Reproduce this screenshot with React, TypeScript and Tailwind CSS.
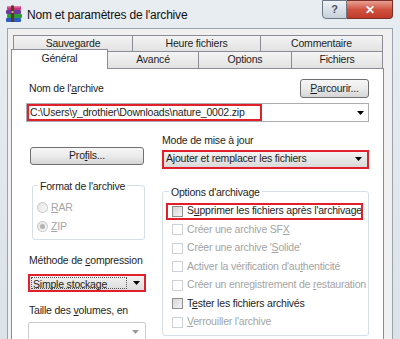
import React from 'react';

function Arrow({ color = '#000' }: { color?: string }) {
  return (
    <svg width="7" height="4" viewBox="0 0 7 4">
      <path d="M0 0h7L3.5 4z" fill={color} />
    </svg>
  );
}

function RarIcon() {
  return (
    <svg width="18" height="17" viewBox="0 0 18 17">
      <rect x="2" y="1" width="14" height="4" rx="1" fill="#c8347c" />
      <rect x="2" y="1" width="14" height="1.5" rx="0.7" fill="#e87ab0" />
      <rect x="1" y="5" width="15" height="4" rx="1" fill="#6a3a9e" />
      <rect x="2" y="9" width="15" height="4" rx="1" fill="#2f9a3c" />
      <rect x="1" y="13" width="15" height="4" rx="1" fill="#2a5cc4" />
      <rect x="6" y="0.5" width="3" height="16.5" fill="#5b3b1c" />
      <rect x="6.5" y="6" width="2" height="2" fill="#d9b35a" />
    </svg>
  );
}

function Check({
  children,
  disabled,
  red,
}: {
  children: React.ReactNode;
  disabled?: boolean;
  red?: boolean;
}) {
  return (
    <div className="relative flex items-center h-[18.5px] pl-[9px]">
      {red && <div className="absolute left-[3px] w-[197px] top-[1px] bottom-0 border-2 border-[#e2202b]" />}
      <span
        className={
          disabled
            ? 'w-[11px] h-[11px] border border-[#cdd0d4] bg-white'
            : 'w-[11px] h-[11px] border border-[#8e8f8f] bg-gradient-to-br from-[#d6d6d6] to-[#f4f4f4]'
        }
      />
      <span className={'ml-[4px] ' + (disabled ? 'text-[#a4a4a4]' : 'text-[#1e1e1e]')}>{children}</span>
    </div>
  );
}

function Radio({ children, checked }: { children: React.ReactNode; checked?: boolean }) {
  return (
    <div className="flex items-center h-[19px] pl-[4px] text-[#a4a4a4]">
      <span className="w-[11px] h-[11px] rounded-full border border-[#c4c7ca] bg-gradient-to-br from-[#e4e4e4] to-[#f8f8f8] flex items-center justify-center">
        {checked && <span className="w-[5px] h-[5px] rounded-full bg-[#b4b4b4]" />}
      </span>
      <span className="ml-[3px]">{children}</span>
    </div>
  );
}

const btn =
  'border border-[#707070] rounded-[3px] bg-gradient-to-b from-[#f6f6f6] via-[#ebebeb] to-[#d5d5d5] flex items-center justify-center';

export default function App() {
  return (
    <div className="w-[400px] h-[339px] overflow-hidden bg-gradient-to-b from-[#e8edf1] to-[#dbe2e8] font-['Liberation_Sans',Arial,sans-serif] text-[10.5px] tracking-[-0.2px] text-[#1e1e1e] flex flex-col">
      {/* title bar */}
      <div className="h-[28px] shrink-0 flex items-start">
        <div className="ml-[5px] mt-[5px]">
          <RarIcon />
        </div>
        <div className="ml-[4px] mt-[6px] text-[12px] tracking-[-0.2px] text-[#101010]">Nom et paramètres de l'archive</div>
        <div className="ml-auto mr-[7px] flex">
          <div className="w-[25px] h-[19px] border border-[#6b7683] rounded-bl-[4px] bg-gradient-to-b from-[#eef2f6] to-[#c7d0da] flex items-center justify-center text-[11px] font-bold text-[#4a5563]">
            ?
          </div>
          <div className="w-[46px] h-[19px] border border-l-0 border-[#7a3028] rounded-br-[4px] bg-gradient-to-b from-[#e8a093] via-[#cf513f] to-[#c23a2a] flex items-center justify-center text-[12px] font-bold text-white">
            ✕
          </div>
        </div>
      </div>

      {/* body */}
      <div className="flex-1 flex pl-[7px]">
        <div className="w-[386px] bg-[#f0f0f0] border border-b-0 border-[#9aa4ae] pt-[6px] pl-[3px] flex flex-col">
          {/* back row of tabs */}
          <div className="flex ml-[2px] h-[17px]">
            <div className="w-[120px] border border-[#898c95] bg-gradient-to-b from-[#f4f4f4] to-[#e2e2e2] flex items-center justify-center">Sauvegarde</div>
            <div className="w-[129px] -ml-px border border-[#898c95] bg-gradient-to-b from-[#f4f4f4] to-[#e2e2e2] flex items-center justify-center">Heure fichiers</div>
            <div className="w-[123px] -ml-px border border-[#898c95] bg-gradient-to-b from-[#f4f4f4] to-[#e2e2e2] flex items-center justify-center">Commentaire</div>
          </div>
          {/* front row of tabs */}
          <div className="flex items-end h-[17px] -mt-px">
            <div className="w-[97px] h-[20px] -mb-px relative z-10 border border-b-0 border-[#898c95] bg-white flex items-center justify-center pb-[2px]">
              Général
            </div>
            <div className="w-[92px] -ml-px h-[17px] border border-b-0 border-[#898c95] bg-gradient-to-b from-[#f4f4f4] to-[#e2e2e2] flex items-center justify-center">Avancé</div>
            <div className="w-[94px] -ml-px h-[17px] border border-b-0 border-[#898c95] bg-gradient-to-b from-[#f4f4f4] to-[#e2e2e2] flex items-center justify-center">Options</div>
            <div className="w-[92px] -ml-px h-[17px] border border-b-0 border-[#898c95] bg-gradient-to-b from-[#f4f4f4] to-[#e2e2e2] flex items-center justify-center">Fichiers</div>
          </div>

          {/* panel */}
          <div className="w-[373px] flex-1 bg-white border border-b-0 border-[#898c95] pt-[10px] pl-[14px] pr-[14px]">
            <div className="flex items-end justify-between h-[19px]">
              <span className="ml-[3px] mb-[1px]">
                Nom de l'<span className="underline">a</span>rchive
              </span>
              <div className={btn + ' w-[69px] h-[19px]'}>
                <span>
                  <span className="underline">P</span>arcourir...
                </span>
              </div>
            </div>

            <div className="relative mt-[5px] h-[19px] border border-[#abadb3] flex items-center justify-between pl-[3px] pr-[4px]">
              <div className="absolute left-0 top-0 bottom-0 w-[235px] border-2 border-[#e2202b]" />
              <span>C:\Users\y_drothier\Downloads\nature_0002.zip</span>
              <Arrow />
            </div>

            <div className="mt-[11px] grid grid-cols-[119px_207px] gap-x-[17px]">
              {/* left column */}
              <div className="flex flex-col">
                <div className={btn + ' mt-[14px] ml-[4px] w-[114px] h-[18px]'}>
                  <span>
                    Pro<span className="underline">f</span>ils...
                  </span>
                </div>
                <div className="relative mt-[20px] ml-[6px] w-[113px] h-[55px] border border-[#d5dfe5] rounded-[3px] pt-[12px]">
                  <span className="absolute -top-[7px] left-[5px] bg-white px-[2px]">Format de l'archive</span>
                  <Radio>
                    <span className="underline">R</span>AR
                  </Radio>
                  <Radio checked>
                    <span className="underline">Z</span>IP
                  </Radio>
                </div>
                <span className="mt-[13px] ml-[3px]">
                  Méthode de <span className="underline">c</span>ompression
                </span>
                <div className="mt-[5px] ml-[2px] w-[118px] h-[18px] border-2 border-[#e2202b] bg-gradient-to-b from-[#f2f2f2] to-[#dcdcdc] flex items-center pl-[1px] pr-[4px]">
                  <span className="flex-1 h-[12px] leading-[12px] border border-dotted border-[#555] pl-[1px] mr-[6px]">Simple stockage</span>
                  <Arrow />
                </div>
                <span className="mt-[11px] ml-[3px]">
                  Taille des <span className="underline">v</span>olumes, en
                </span>
                <div className="mt-[3px] ml-[2px] w-[118px] h-[20px] border border-[#c9cdd2] rounded-[2px] bg-white flex items-center justify-end pr-[6px]">
                  <Arrow color="#9a9a9a" />
                </div>
              </div>

              {/* right column */}
              <div className="flex flex-col">
                <span>
                  Mode de mise à <span className="underline">j</span>our
                </span>
                <div className="mt-[1px] h-[19px] border-2 border-[#e2202b] bg-gradient-to-b from-[#f2f2f2] to-[#dadada] flex items-center justify-between pl-[2px] pr-[5px]">
                  <span>Ajouter et remplacer les fichiers</span>
                  <Arrow />
                </div>
                <div className="relative mt-[22px] h-[145px] border border-[#d5dfe5] rounded-[3px] pt-[10px]">
                  <span className="absolute -top-[7px] left-[6px] bg-white px-[2px]">Options d'archivage</span>
                  <Check red>
                    S<span className="underline">u</span>pprimer les fichiers après l'archivage
                  </Check>
                  <Check disabled>
                    Créer une archive SF<span className="underline">X</span>
                  </Check>
                  <Check disabled>
                    Créer une archive '<span className="underline">S</span>olide'
                  </Check>
                  <Check disabled>
                    Activer la vérification d'au<span className="underline">t</span>henticité
                  </Check>
                  <Check disabled>
                    Créer un enregistrement de <span className="underline">r</span>estauration
                  </Check>
                  <Check>
                    T<span className="underline">e</span>ster les fichiers archivés
                  </Check>
                  <Check disabled>
                    <span className="underline">V</span>errouiller l'archive
                  </Check>
                </div>
              </div>
            </div>
          </div>
        </div>
        <div className="flex-1" />
      </div>
    </div>
  );
}
